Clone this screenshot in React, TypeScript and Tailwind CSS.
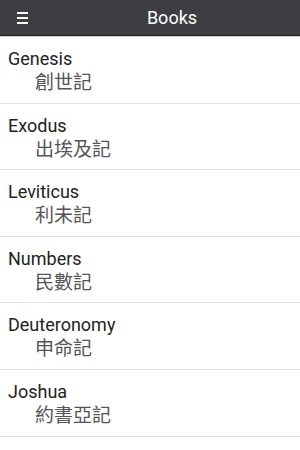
const books = [
  { en: "Genesis", zh: "創世記" },
  { en: "Exodus", zh: "出埃及記" },
  { en: "Leviticus", zh: "利未記" },
  { en: "Numbers", zh: "民數記" },
  { en: "Deuteronomy", zh: "申命記" },
  { en: "Joshua", zh: "約書亞記" },
];

export default function App() {
  return (
    <div className="w-[300px] h-[450px] bg-white overflow-hidden font-['Roboto','Noto_Sans_CJK_TC',sans-serif]">
      {/* HEADER */}
      <div className="h-[36px] bg-[#3d3e42] border-b border-[#1c1d20] flex items-center">
        <div className="w-[44px] h-full flex items-center pl-[17px]">
          <div className="flex flex-col gap-[3px]">
            <span className="block w-[11px] h-[2px] bg-white" />
            <span className="block w-[11px] h-[2px] bg-white" />
            <span className="block w-[11px] h-[2px] bg-white" />
          </div>
        </div>
        <h1 className="flex-1 text-center text-white text-[18px] leading-none">Books</h1>
      </div>
      <div className="h-[1px] bg-[#d8d8d8]" />

      {/* LIST */}
      {books.map((b) => (
        <div
          key={b.en}
          className="h-[66.6px] border-b border-[#e0e0e0] pl-[8px] pt-[11px]"
        >
          <p className="text-[18px] leading-[22px] text-[#222]">{b.en}</p>
          <p className="text-[19px] leading-[26px] text-[#555] pl-[27px]">{b.zh}</p>
        </div>
      ))}
    </div>
  );
}
